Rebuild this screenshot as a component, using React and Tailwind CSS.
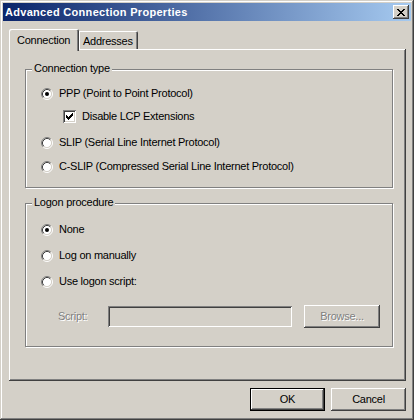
import React from 'react';

const raised =
  'shadow-[inset_-1px_-1px_#404040,inset_1px_1px_#ffffff,inset_-2px_-2px_#808080,inset_2px_2px_#d4d0c8]';

const Radio = ({ checked }) => (
  <svg width="12" height="12" viewBox="0 0 12 12" className="shrink-0">
    <circle cx="6" cy="6" r="4.5" fill="#ffffff" />
    <path d="M2.11 9.89 A5.5 5.5 0 0 1 9.89 2.11" fill="none" stroke="#808080" strokeWidth="1" />
    <path d="M9.89 2.11 A5.5 5.5 0 0 1 2.11 9.89" fill="none" stroke="#ffffff" strokeWidth="1" />
    <path d="M2.82 9.18 A4.5 4.5 0 0 1 9.18 2.82" fill="none" stroke="#404040" strokeWidth="1" />
    <path d="M9.18 2.82 A4.5 4.5 0 0 1 2.82 9.18" fill="none" stroke="#d4d0c8" strokeWidth="1" />
    {checked && <circle cx="6" cy="6" r="2" fill="#000000" />}
  </svg>
);

const Checkbox = ({ checked }) => (
  <div className="w-[13px] h-[13px] shrink-0 bg-white shadow-[inset_1px_1px_#808080,inset_-1px_-1px_#ffffff,inset_2px_2px_#404040,inset_-2px_-2px_#d4d0c8]">
    {checked && (
      <svg width="13" height="13" viewBox="0 0 13 13" shapeRendering="crispEdges">
        <rect x="9" y="3" width="1" height="1" fill="#000" />
        <rect x="8" y="4" width="2" height="1" fill="#000" />
        <rect x="3" y="5" width="1" height="1" fill="#000" />
        <rect x="7" y="5" width="3" height="1" fill="#000" />
        <rect x="3" y="6" width="2" height="1" fill="#000" />
        <rect x="6" y="6" width="3" height="1" fill="#000" />
        <rect x="3" y="7" width="5" height="1" fill="#000" />
        <rect x="4" y="8" width="3" height="1" fill="#000" />
        <rect x="5" y="9" width="1" height="1" fill="#000" />
      </svg>
    )}
  </div>
);

const RadioRow = ({ checked, label, className = '' }) => (
  <div className={`flex items-center h-[13px] ${className}`}>
    <Radio checked={checked} />
    <span className="ml-[6px] leading-[13px]">{label}</span>
  </div>
);

const GroupBox = ({ title, className = '', children }) => (
  <div
    className={`relative ml-[16px] w-[368px] border border-[#808080] shadow-[1px_1px_0_#ffffff,inset_1px_1px_0_#ffffff] ${className}`}
  >
    <span className="absolute left-[6px] top-[-8px] px-[2px] bg-[#d4d0c8] leading-[13px]">{title}</span>
    {children}
  </div>
);

const CloseGlyph = () => (
  <svg width="8" height="7" viewBox="0 0 8 7" shapeRendering="crispEdges">
    <rect x="0" y="0" width="2" height="1" fill="#000" />
    <rect x="6" y="0" width="2" height="1" fill="#000" />
    <rect x="1" y="1" width="2" height="1" fill="#000" />
    <rect x="5" y="1" width="2" height="1" fill="#000" />
    <rect x="2" y="2" width="4" height="1" fill="#000" />
    <rect x="3" y="3" width="2" height="1" fill="#000" />
    <rect x="2" y="4" width="4" height="1" fill="#000" />
    <rect x="1" y="5" width="2" height="1" fill="#000" />
    <rect x="5" y="5" width="2" height="1" fill="#000" />
    <rect x="0" y="6" width="2" height="1" fill="#000" />
    <rect x="6" y="6" width="2" height="1" fill="#000" />
  </svg>
);

export default function App() {
  return (
    <div
      className="w-[414px] h-[420px] p-[3px] flex flex-col bg-[#d4d0c8] text-[11px] tracking-[-0.25px] text-black font-['Liberation_Sans',Arial,sans-serif] shadow-[inset_-1px_-1px_#404040,inset_1px_1px_#d4d0c8,inset_-2px_-2px_#808080,inset_2px_2px_#ffffff] select-none"
    >
      {/* title bar */}
      <div className="h-[18px] flex items-center justify-between pl-[2px] pr-[2px] bg-[linear-gradient(to_right,#0a246a,#a6caf0)]">
        <span className="text-white font-bold tracking-[0.3px] leading-[13px]">Advanced Connection Properties</span>
        <button className={`w-[16px] h-[14px] flex items-center justify-center bg-[#d4d0c8] ${raised}`}>
          <CloseGlyph />
        </button>
      </div>

      <div className="pl-[6px] pr-[5px]">
        {/* tabs */}
        <div className="relative z-10 mt-[8px] h-[22px] flex items-start">
          <div className="w-[70px] h-[22px] pt-[3px] pl-[8px] bg-[#d4d0c8] rounded-tl-[2px] rounded-tr-[2px] shadow-[inset_1px_1px_#ffffff,inset_-1px_0_#404040,inset_-2px_0_#808080]">
            <span className="leading-[13px]">Connection</span>
          </div>
          <div className="mt-[2px] w-[59px] h-[18px] pt-[2px] pl-[4px] bg-[#d4d0c8] rounded-tr-[2px] shadow-[inset_1px_1px_#ffffff,inset_-1px_0_#404040,inset_-2px_0_#808080]">
            <span className="leading-[13px]">Addresses</span>
          </div>
        </div>

        {/* panel */}
        <div className="mt-[-2px] h-[332px] pt-[20px] shadow-[inset_-1px_-1px_#404040,inset_1px_1px_#ffffff,inset_-2px_-2px_#808080]">
          <GroupBox title="Connection type" className="h-[119px] pt-[17px] pl-[15px]">
            <RadioRow checked label="PPP (Point to Point Protocol)" />
            <div className="mt-[10px] ml-[22px] flex items-center h-[13px]">
              <Checkbox checked />
              <span className="ml-[6px] leading-[13px]">Disable LCP Extensions</span>
            </div>
            <RadioRow className="mt-[13px]" label="SLIP (Serial Line Internet Protocol)" />
            <RadioRow className="mt-[11px]" label="C-SLIP (Compressed Serial Line Internet Protocol)" />
          </GroupBox>

          <GroupBox title="Logon procedure" className="mt-[15px] h-[144px] pt-[19px] pl-[15px]">
            <RadioRow checked label="None" />
            <RadioRow className="mt-[13px]" label="Log on manually" />
            <RadioRow className="mt-[13px]" label="Use logon script:" />
            <div className="mt-[17px] flex items-center h-[23px]">
              <span className="ml-[17px] w-[50px] leading-[13px] text-[#808080] [text-shadow:1px_1px_0_#ffffff]">Script:</span>
              <div className="w-[184px] h-[21px] bg-[#d4d0c8] shadow-[inset_1px_1px_#808080,inset_-1px_-1px_#ffffff,inset_2px_2px_#404040,inset_-2px_-2px_#d4d0c8]" />
              <button className={`ml-[12px] w-[76px] h-[23px] bg-[#d4d0c8] text-[#808080] [text-shadow:1px_1px_0_#ffffff] ${raised}`}>
                Browse...
              </button>
            </div>
          </GroupBox>
        </div>

        {/* buttons */}
        <div className="mt-[7px] flex justify-end gap-[6px]">
          <button className="w-[75px] h-[23px] border border-black bg-[#d4d0c8] shadow-[inset_-1px_-1px_#404040,inset_1px_1px_#ffffff,inset_-2px_-2px_#808080]">
            OK
          </button>
          <button className={`w-[75px] h-[23px] bg-[#d4d0c8] ${raised}`}>Cancel</button>
        </div>
      </div>
    </div>
  );
}
